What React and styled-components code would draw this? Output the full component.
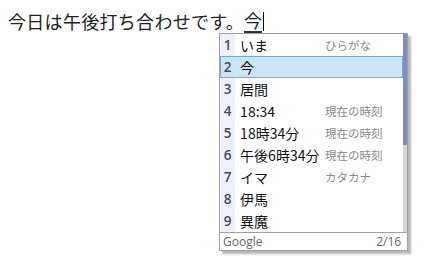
import React from 'react';
import styled, { createGlobalStyle } from 'styled-components';

const GlobalStyle = createGlobalStyle`
    html, body {
        margin: 0;
        background: #fff;
    }
    body {
        font-family: "Noto Sans CJK JP", "Noto Sans", sans-serif;
    }
`;

const Page = styled.div`
    width: 436px;
    height: 276px;
    padding: 9px 0 0 8px;
    box-sizing: border-box;
`;

const Line = styled.div`
    display: flex;
    align-items: center;
    height: 24px;
    font-size: 18px;
    letter-spacing: 0.3px;
    color: #222;
    line-height: 24px;
`;

const Composing = styled.span`
    position: relative;
    display: inline-block;
    border-bottom: 2px solid #333;
    height: 22px;
    line-height: 22px;
    letter-spacing: 0;
`;

const Caret = styled.span`
    display: inline-block;
    width: 1px;
    height: 19px;
    background: #000;
    margin-left: 1px;
`;

const Popup = styled.div`
    position: absolute;
    top: 24px;
    left: -25px;
    width: 189px;
    border: 1px solid #a0a0a0;
    background: #fff;
    box-shadow: 3px 3px 2px rgba(0, 0, 0, 0.28);
    display: flex;
    flex-direction: column;
    box-sizing: border-box;
    z-index: 2;
`;

const Body = styled.div`
    display: flex;
`;

const List = styled.div`
    flex: 1;
    display: flex;
    flex-direction: column;
    background: linear-gradient(to right, #eef0fb 0 15px, #fff 15px);
`;

const Row = styled.div`
    display: flex;
    align-items: center;
    height: 22px;
    box-sizing: border-box;
    background: ${p => (p.selected ? '#cce4f7' : 'transparent')};
    border: 1px solid ${p => (p.selected ? '#7aa7d9' : 'transparent')};
`;

const Num = styled.span`
    width: 15px;
    text-align: center;
    font-family: "Open Sans", "Noto Sans", sans-serif;
    font-size: 13.5px;
    font-weight: 600;
    color: #4a4a55;
    margin-left: -1px;
`;

const Word = styled.span`
    width: 85px;
    margin-left: 5px;
    font-size: 14px;
    color: #111;
    white-space: nowrap;
`;

const Note = styled.span`
    font-size: 11.5px;
    color: #888;
    white-space: nowrap;
`;

const Scroll = styled.div`
    width: 4px;
    background: #d6d6d6;
    display: flex;
    flex-direction: column;
`;

const Thumb = styled.div`
    height: 111px;
    background: #7d8fba;
`;

const Footer = styled.div`
    display: flex;
    justify-content: space-between;
    align-items: center;
    height: 17px;
    padding: 0 6px 0 3px;
    border-top: 1px solid #a0a0a0;
    font-family: "Open Sans", "Noto Sans", sans-serif;
    font-size: 12px;
    color: #666;
`;

const candidates = [
    { word: 'いま', note: 'ひらがな' },
    { word: '今', note: '', selected: true },
    { word: '居間', note: '' },
    { word: '18:34', note: '現在の時刻' },
    { word: '18時34分', note: '現在の時刻' },
    { word: '午後6時34分', note: '現在の時刻' },
    { word: 'イマ', note: 'カタカナ' },
    { word: '伊馬', note: '' },
    { word: '異魔', note: '' },
];

const App = () => (
    <Page>
        <GlobalStyle />
        <Line>
            今日は午後打ち合わせです。
            <Composing>
                今
                <Popup>
                    <Body>
                        <List>
                            {candidates.map((c, i) => (
                                <Row key={c.word} selected={c.selected}>
                                    <Num>{i + 1}</Num>
                                    <Word>{c.word}</Word>
                                    <Note>{c.note}</Note>
                                </Row>
                            ))}
                        </List>
                        <Scroll>
                            <Thumb />
                        </Scroll>
                    </Body>
                    <Footer>
                        <span>Google</span>
                        <span>2/16</span>
                    </Footer>
                </Popup>
            </Composing>
            <Caret />
        </Line>
    </Page>
);

export default App;
